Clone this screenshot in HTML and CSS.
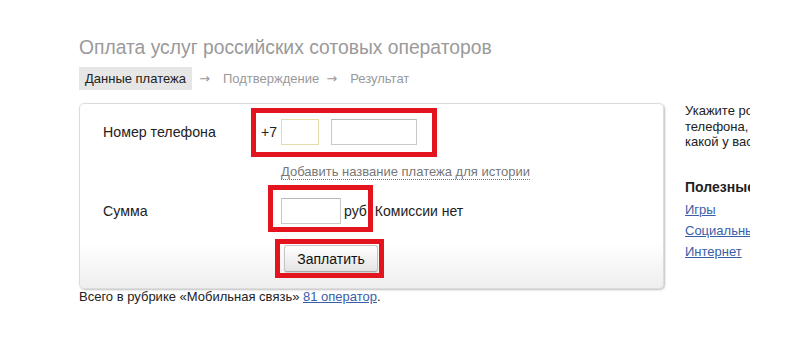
FILE: index.html
```html
<!DOCTYPE html>
<html lang="ru">
<head>
    <meta charset="UTF-8">
    <meta name="viewport" content="width=device-width, initial-scale=1.0">
    <title>Оплата услуг сотовых операторов</title>
    <link rel="stylesheet" href="styles.css">
</head>
<body>
    <div class="page">
        <h1 class="title">Оплата услуг российских сотовых операторов</h1>
        <div class="steps">
            <span class="step step-active">Данные платежа</span>
            <span class="arrow">&rarr;</span>
            <span class="step">Подтверждение</span>
            <span class="arrow">&rarr;</span>
            <span class="step">Результат</span>
        </div>

        <div class="layout">
            <div class="main">
                <form class="card" onsubmit="return false">
                    <div class="row">
                        <label class="label">Номер телефона</label>
                        <div class="phone">
                            <span class="prefix">+7</span>
                            <input class="input input-code" type="text" maxlength="3">
                            <input class="input input-number" type="text" maxlength="7">
                            <span class="mark mark-phone"></span>
                        </div>
                    </div>
                    <div class="row row-link">
                        <span class="label"></span>
                        <a class="add-name" href="#">Добавить название платежа для истории</a>
                    </div>
                    <div class="row row-sum">
                        <label class="label">Сумма</label>
                        <div class="sum-box">
                            <input class="input input-sum" type="text">
                            <span class="currency">руб</span>
                            <span class="mark mark-sum"></span>
                        </div>
                        <span class="fee">Комиссии нет</span>
                    </div>
                    <div class="row row-submit">
                        <span class="label"></span>
                        <div class="btn-box">
                            <button class="pay-btn" type="submit">Заплатить</button>
                            <span class="mark mark-btn"></span>
                        </div>
                    </div>
                </form>
                <p class="note">Всего в рубрике «Мобильная связь» <a href="#">81 оператор</a>.</p>
            </div>

            <div class="aside">
                <p class="hint">Укажите российский номер<br>телефона, и мы определим,<br>какой у вас оператор.</p>
                <h3 class="aside-title">Полезные ссылки</h3>
                <a class="aside-link" href="#">Игры</a>
                <a class="aside-link" href="#">Социальные сети</a>
                <a class="aside-link" href="#">Интернет</a>
            </div>
        </div>
    </div>
</body>
</html>
```

FILE: styles.css
```css
body {
    font-family: "Liberation Sans", Arial, sans-serif;
    background-color: #fff;
    color: #222;
    margin: 0;
    padding: 0;
}
.page {
    padding: 36px 0 0 79px;
}
.title {
    margin: 0;
    font-size: 19.3px;
    font-weight: normal;
    line-height: 24px;
    color: #9a9a9a;
}
.steps {
    display: flex;
    align-items: center;
    margin-top: 7px;
    font-size: 13px;
    line-height: 15px;
    color: #999;
}
.step-active {
    background-color: #e6e6e6;
    color: #222;
    padding: 4px 6px;
}
.arrow {
    box-sizing: border-box;
    width: 31px;
    padding-left: 7px;
    font-family: "DejaVu Sans", sans-serif;
    color: #999;
}
.layout {
    display: flex;
    margin-top: 13px;
}
.main {
    width: 585px;
}
.card {
    margin: 0;
    padding: 15px 0 16px 23px;
    border: 1px solid #dcdcdc;
    border-radius: 5px;
    background: linear-gradient(#fff 76%, #eeeeee);
    box-shadow: 1px 1px 2px rgba(0, 0, 0, 0.25);
}
.row {
    display: flex;
    align-items: center;
}
.label {
    width: 178px;
    flex-shrink: 0;
    font-size: 14.2px;
}
.row-link {
    margin-top: 19px;
}
.row-sum {
    margin-top: 18px;
}
.row-submit {
    margin-top: 21px;
}
.input {
    box-sizing: border-box;
    height: 26px;
    border: 1px solid #c9c9c9;
    border-top-color: #b9b9b9;
    background: #fff;
    font: inherit;
    padding: 0 4px;
}
.phone, .sum-box, .btn-box {
    position: relative;
    display: flex;
    align-items: center;
}
.phone {
    margin-left: -20px;
}
.prefix {
    width: 20px;
    font-size: 14px;
}
.input-code {
    width: 38px;
    border-color: #e6dcaa;
}
.input-number {
    width: 86px;
    margin-left: 12px;
}
.input-sum {
    width: 60px;
}
.currency {
    margin-left: 3px;
    font-size: 14px;
}
.fee {
    margin-left: 8px;
    font-size: 14px;
}
.add-name {
    font-size: 13px;
    line-height: 15px;
    color: #777;
    text-decoration: none;
    border-bottom: 1px dotted #777;
}
.btn-box {
    margin-left: 3px;
}
.pay-btn {
    width: 94px;
    height: 27px;
    font-family: inherit;
    font-size: 14px;
    color: #111;
    border: 1px solid #c4c4c4;
    border-bottom-color: #aaa;
    border-radius: 3px;
    background: linear-gradient(#fff, #e4e4e4);
    box-shadow: 0 1px 1px rgba(0, 0, 0, 0.15);
    cursor: pointer;
}
/* red annotation frames */
.mark {
    position: absolute;
    border: 5px solid #e3141e;
    pointer-events: none;
}
.mark-phone {
    left: -10px;
    right: -20px;
    top: -11px;
    bottom: -12px;
}
.mark-sum {
    left: -13px;
    right: -6px;
    top: -13px;
    bottom: -8px;
}
.mark-btn {
    left: -9px;
    right: -6px;
    top: -6px;
    bottom: -6px;
}
.note {
    margin: 0;
    font-size: 13px;
    line-height: 16px;
}
.note a {
    color: #3a5ea8;
}
.aside {
    width: 65px;
    margin-left: 21px;
    overflow: hidden;
    white-space: nowrap;
    font-size: 13px;
}
.hint {
    margin: 0;
    line-height: 15.5px;
}
.aside-title {
    margin: 28px 0 0;
    font-size: 14px;
    line-height: 18px;
}
.aside-link {
    display: block;
    margin-top: 6px;
    line-height: 15px;
    color: #3a5ea8;
}
```
